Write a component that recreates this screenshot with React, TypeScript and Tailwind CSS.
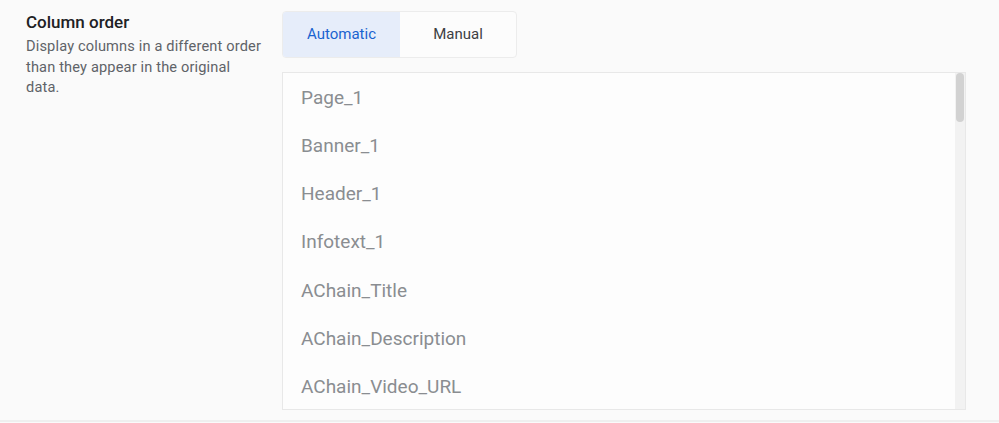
const columns = [
  "Page_1",
  "Banner_1",
  "Header_1",
  "Infotext_1",
  "AChain_Title",
  "AChain_Description",
  "AChain_Video_URL",
];

export default function App() {
  return (
    <main
      className="flex h-[423px] w-[999px] flex-col overflow-hidden bg-[#fafafa]"
      style={{ fontFamily: "Roboto, 'Noto Sans', sans-serif" }}
    >
      <div className="flex flex-1 gap-[18px] pl-[26px] pt-[10px]">
        <div className="w-[238px] shrink-0">
          <h2 className="text-[17px] font-medium leading-6 text-[#202124]">Column order</h2>
          <p className="mt-[2px] text-[14.6px] leading-[20.5px] tracking-[0.15px] text-[#5f6368]">
            Display columns in a different order than they appear in the original data.
          </p>
        </div>

        <div className="flex flex-col">
          <div className="mt-[1px] flex h-[47px] w-[235px] overflow-hidden rounded-[4px] border border-[#ececec] bg-[#fcfcfc] text-[15px]">
            <button className="w-[117px] bg-[#e6edfa] text-[#1a63d0]">Automatic</button>
            <button className="flex-1 text-[#3c4043]">Manual</button>
          </div>

          <div className="mt-[14px] flex h-[338px] w-[684px] overflow-hidden border border-[#e8e8e8] bg-[#fdfdfd]">
            <ul className="flex-1 pt-[1px]">
              {columns.map((c) => (
                <li key={c} className="flex h-[48.2px] items-center pl-[18px] text-[19px] text-[#8a8d91]">
                  {c}
                </li>
              ))}
            </ul>
            <div className="w-[10px] bg-[#f2f2f2] px-[1px]">
              <div className="h-[49px] rounded-full bg-[#d2d2d2]" />
            </div>
          </div>
        </div>
      </div>
      <div className="mb-[1px] h-[2px] bg-[#efefef]" />
    </main>
  );
}
